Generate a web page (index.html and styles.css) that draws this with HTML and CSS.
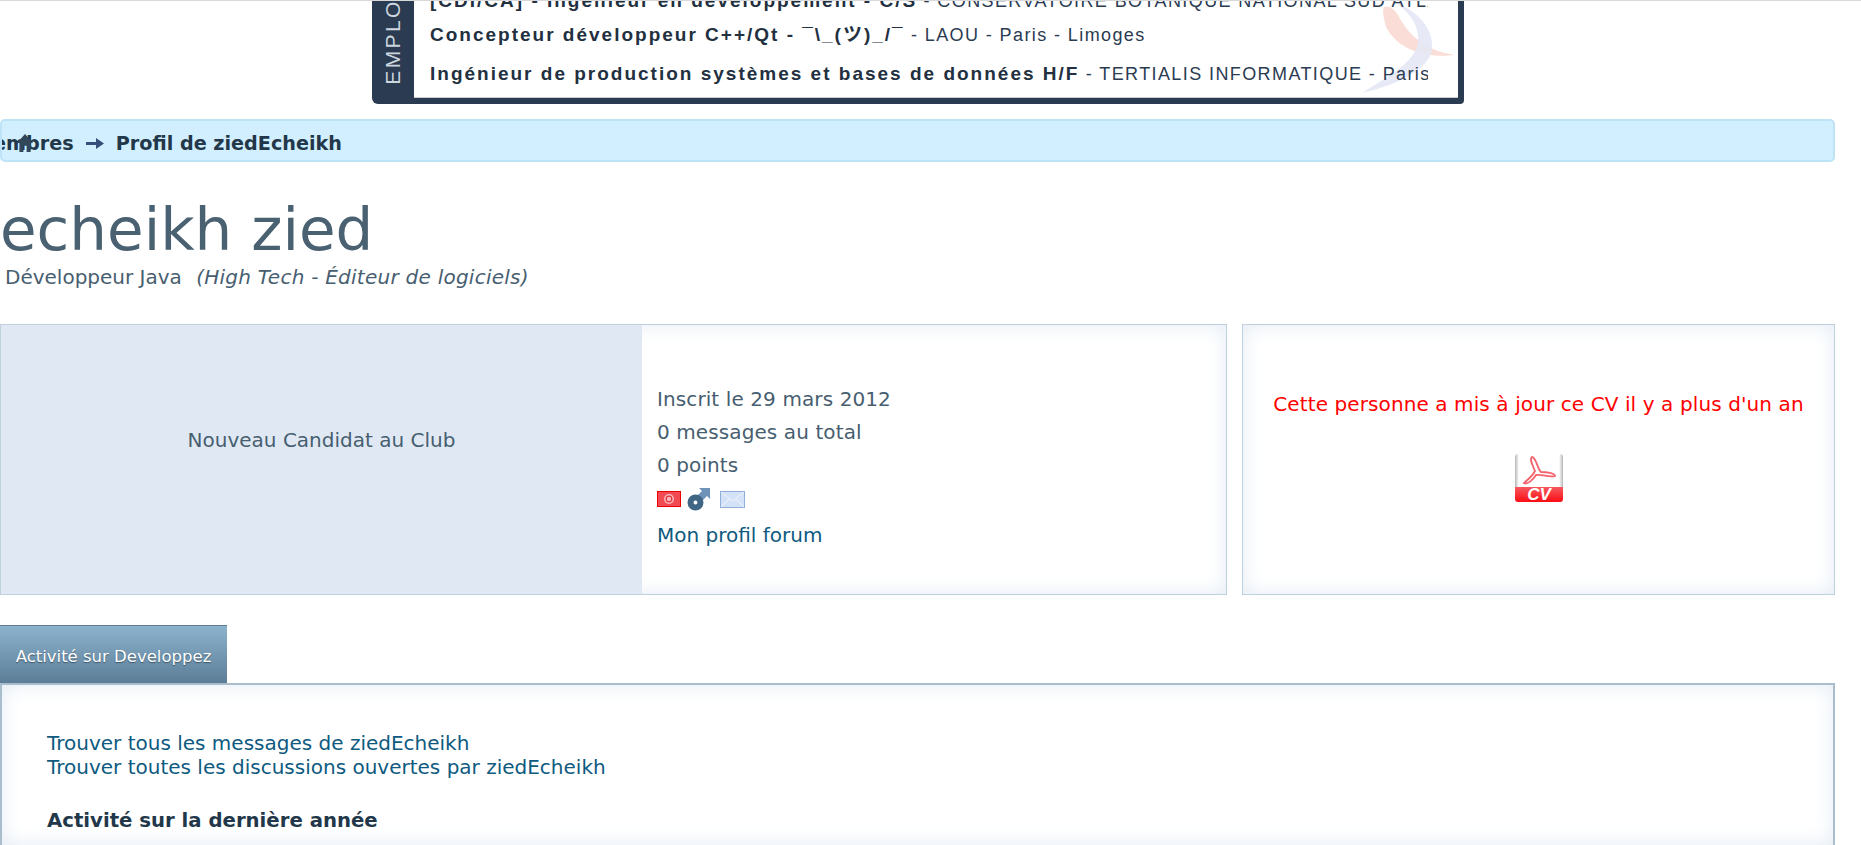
FILE: index.html
```html
<!DOCTYPE html>
<html lang="fr">
<head>
  <meta charset="UTF-8" />
  <title>Profil de ziedEcheikh</title>
  <link rel="stylesheet" href="styles.css">
</head>
<body>

  <div class="top-banner">
    <div class="banner-side"><span>EMPLOI</span></div>
    <div class="banner-jobs">
      <svg class="swoosh" viewBox="0 0 96 100" width="96" height="100">
        <path d="M24 6 C30 4 34 8 38 14 C48 34 66 50 95 54 C62 58 36 46 26 26 C24 18 22 10 24 6 Z" fill="#f8d5cc" opacity="0.8"/>
        <path d="M36 2 C58 10 74 28 72 48 C70 66 44 82 2 92 C30 74 54 62 58 42 C60 26 50 12 36 2 Z" fill="#e4e8f5" opacity="0.9"/>
      </svg>
      <p class="job job-cut"><b>[CDI/CA] - Ingénieur en développement - C/S</b> - CONSERVATOIRE BOTANIQUE NATIONAL SUD ATLANTIQUE</p>
      <p class="job"><b>Concepteur développeur C++/Qt - ¯\_(ツ)_/¯</b> - LAOU - Paris - Limoges</p>
      <p class="job"><b>Ingénieur de production systèmes et bases de données H/F</b> - TERTIALIS INFORMATIQUE - Paris</p>
    </div>
  </div>

  <div class="crumbs">
    <svg class="crumb-home" viewBox="0 0 20 20" width="16" height="18" preserveAspectRatio="none">
      <path d="M10 0 L20 10 L17 10 L17 20 L12 20 L12 13 L8 13 L8 20 L3 20 L3 10 L0 10 Z" fill="#33475a"/>
    </svg>
    <span class="crumb-first">Membres</span>
    <svg class="crumb-arrow" viewBox="0 0 18 11" width="18" height="11">
      <path d="M0 4 H10 V0 L18 5.5 L10 11 V7 H0 Z" fill="#34507a"/>
    </svg>
    <span>Profil de ziedEcheikh</span>
  </div>

  <h1 class="name">echeikh zied</h1>
  <p class="job-title">Développeur Java <em>(High Tech - Éditeur de logiciels)</em></p>

  <div class="cards">
    <div class="card card-main">
      <div class="rank">Nouveau Candidat au Club</div>
      <div class="card-info">
        <p>Inscrit le 29 mars 2012</p>
        <p>0 messages au total</p>
        <p>0 points</p>
        <div class="info-icons">
          <svg class="icon-flag" viewBox="0 0 24 16" width="24" height="16">
            <rect x="0.5" y="0.5" width="23" height="15" fill="#f24a52" stroke="#ee0000"/>
            <circle cx="12" cy="8" r="5" fill="#f8b8bc"/>
            <circle cx="12" cy="8" r="2.8" fill="none" stroke="#e8313a" stroke-width="1.2"/>
          </svg>
          <svg class="icon-male" viewBox="0 0 24 24" width="24" height="24">
            <path d="M12 1 H23 V12 L20 9 L15 14 L10 9 L15 4 Z" fill="#6f92b8"/>
            <circle cx="8.5" cy="15.5" r="5" fill="none" stroke="#3f6685" stroke-width="6"/>
          </svg>
          <svg viewBox="0 0 25 17" width="25" height="17">
            <rect x="0.5" y="0.5" width="24" height="16" fill="#d3e2f6" stroke="#8fb0d8"/>
            <path d="M1 1 L12.5 10 L24 1 M1 16 L9 8 M24 16 L16 8" fill="none" stroke="#f2f6fc"/>
          </svg>
        </div>
        <a class="link" href="#">Mon profil forum</a>
      </div>
    </div>
    <div class="card card-cv">
      <p class="cv-warning">Cette personne a mis à jour ce CV il y a plus d'un an</p>
      <svg viewBox="0 0 48 48" width="48" height="48">
        <defs>
          <linearGradient id="cvSheet">
            <stop offset="0" stop-color="#b5b5b5"/>
            <stop offset="0.08" stop-color="#fff"/>
            <stop offset="0.92" stop-color="#fff"/>
            <stop offset="1" stop-color="#b5b5b5"/>
          </linearGradient>
          <linearGradient id="cvBand" x2="0" y2="1">
            <stop offset="0" stop-color="#f5595e"/>
            <stop offset="1" stop-color="#fb0d14"/>
          </linearGradient>
        </defs>
        <path d="M3 0 H45 A3 3 0 0 1 48 3 V34 H0 V3 A3 3 0 0 1 3 0 Z" fill="url(#cvSheet)"/>
        <path d="M17 3 C14 5 18 12 20 17 C17 23 12 26 9 29 C12 31 18 26 21 21 C27 20 35 24 40 22 C40 19 31 18 26 18 C22 14 21 3 17 3 Z" fill="none" stroke="#f4646c" stroke-width="1.8"/>
        <path d="M0 33 H48 V45 A3 3 0 0 1 45 48 H3 A3 3 0 0 1 0 45 Z" fill="url(#cvBand)"/>
        <text class="cv-label" x="24" y="46">CV</text>
      </svg>
    </div>
  </div>

  <div class="tabs"><span class="tab">Activité sur Developpez</span></div>
  <div class="activity">
    <a class="link" href="#">Trouver tous les messages de ziedEcheikh</a>
    <a class="link" href="#">Trouver toutes les discussions ouvertes par ziedEcheikh</a>
    <h2>Activité sur la dernière année</h2>
  </div>

</body>
</html>
```

FILE: styles.css
```css
html {
  height: 100vh;
  overflow: hidden;
}

body {
  display: flex;
  flex-direction: column;
  height: 100vh;
  margin: 0;
  overflow: hidden;
  background: #fff;
  border-top: 1px solid #d9d9d9;
  box-sizing: border-box;
  font-family: "DejaVu Sans", sans-serif;
  font-size: 20px;
  color: #475e70;
}

.top-banner {
  display: flex;
  flex: none;
  width: 1092px;
  height: 103px;
  margin-left: 372px;
  background: #2a3b52;
  border-radius: 0 0 4px 6px;
  overflow: hidden;
}

.banner-side {
  width: 42px;
  display: flex;
  align-items: flex-end;
  justify-content: center;
  padding-bottom: 19px;
  box-sizing: border-box;
  color: #cdd5de;
  font-family: "Liberation Sans", sans-serif;
  font-size: 21px;
  letter-spacing: 2.4px;
}

.banner-side span {
  writing-mode: vertical-rl;
  transform: rotate(180deg);
}

.banner-jobs {
  position: relative;
  width: 1044px;
  height: 97px;
  padding: 0 30px 0 16px;
  box-sizing: border-box;
  background: #fff;
  border-bottom: 1px solid #ccc;
  overflow: hidden;
  font-family: "Liberation Sans", "Noto Sans CJK JP", sans-serif;
  font-size: 18px;
  letter-spacing: 1.4px;
  color: #2a3b52;
}

.swoosh {
  position: absolute;
  right: 2px;
  top: 0;
}

.job {
  position: relative;
  margin: 0;
  height: 39px;
  line-height: 39px;
  white-space: nowrap;
  overflow: hidden;
}

.job-cut {
  height: 14px;
  line-height: 0;
}

.job b {
  font-size: 19px;
  letter-spacing: 2px;
  color: #22303f;
}

.crumbs {
  position: relative;
  display: flex;
  flex: none;
  align-items: center;
  gap: 12px;
  width: 1835px;
  height: 43px;
  margin-top: 15px;
  padding-top: 6px;
  box-sizing: border-box;
  background: #d2efff;
  border: 2px solid #bfe3f6;
  border-radius: 5px;
  overflow: hidden;
  color: #22384a;
  font-size: 19.2px;
  font-weight: bold;
}

.crumb-first {
  margin-left: -28px;
}

.crumb-home {
  position: absolute;
  left: 15px;
  top: 13px;
}

.crumb-arrow {
  flex: none;
}

.name {
  flex: none;
  margin: 29px 0 0;
  font-size: 59.5px;
  font-weight: normal;
  line-height: 78px;
  color: #4a6172;
}

.job-title {
  flex: none;
  margin: -4px 0 0 5px;
  line-height: 24px;
}

.job-title em {
  margin-left: 8px;
  letter-spacing: 0.25px;
}

.cards {
  display: flex;
  flex: none;
  gap: 15px;
  margin-top: 35px;
  width: 1835px;
}

.card {
  height: 271px;
  box-sizing: border-box;
  background: #fff;
  border: 1px solid #bfd0df;
  box-shadow: inset 0 0 20px #e3ebf4;
}

.card-main {
  display: flex;
  width: 1227px;
}

.rank {
  display: flex;
  align-items: center;
  justify-content: center;
  width: 641px;
  padding-bottom: 40px;
  box-sizing: border-box;
  background: #e0e9f3;
}

.card-info {
  padding: 58px 0 0 15px;
}

.card-info p {
  margin: 0;
  height: 33px;
  line-height: 33px;
  letter-spacing: 0.1px;
}

.info-icons {
  display: flex;
  align-items: center;
  gap: 6px;
  height: 34px;
}

.icon-male {
  margin-right: 3px;
}

.link {
  display: block;
  color: #0e5a80;
  text-decoration: none;
}

.card-info .link {
  line-height: 38px;
}

.card-cv {
  flex: 1;
  text-align: center;
}

.cv-warning {
  margin: 67px 0 38px;
  color: #f00;
  line-height: 24px;
  letter-spacing: 0.1px;
}

.cv-label {
  font-family: "Liberation Sans", sans-serif;
  font-size: 17px;
  font-weight: bold;
  font-style: italic;
  fill: #fff;
  text-anchor: middle;
}

.tabs {
  display: flex;
  flex: none;
  margin-top: 30px;
}

.tab {
  width: 227px;
  height: 58px;
  line-height: 61px;
  box-sizing: border-box;
  text-align: center;
  background: linear-gradient(#8cb3ce, #5c7d96);
  border-top: 1px solid #5d7e96;
  color: #fff;
  font-size: 16.5px;
  text-shadow: 0 1px 1px #3c5568;
}

.activity {
  flex: 1;
  width: 1835px;
  padding: 46px 46px 0;
  box-sizing: border-box;
  border-top: 2px solid #a9bdcc;
  border-left: 2px solid #a9bdcc;
  border-right: 2px solid #a9bdcc;
  box-shadow: inset 0 0 20px #e3ebf4;
}

.activity .link {
  line-height: 24px;
  margin-left: -1px;
}

.activity h2 {
  margin: 30px 0 0 -1px;
  font-size: 19.7px;
  line-height: 24px;
  color: #22384a;
}
```
